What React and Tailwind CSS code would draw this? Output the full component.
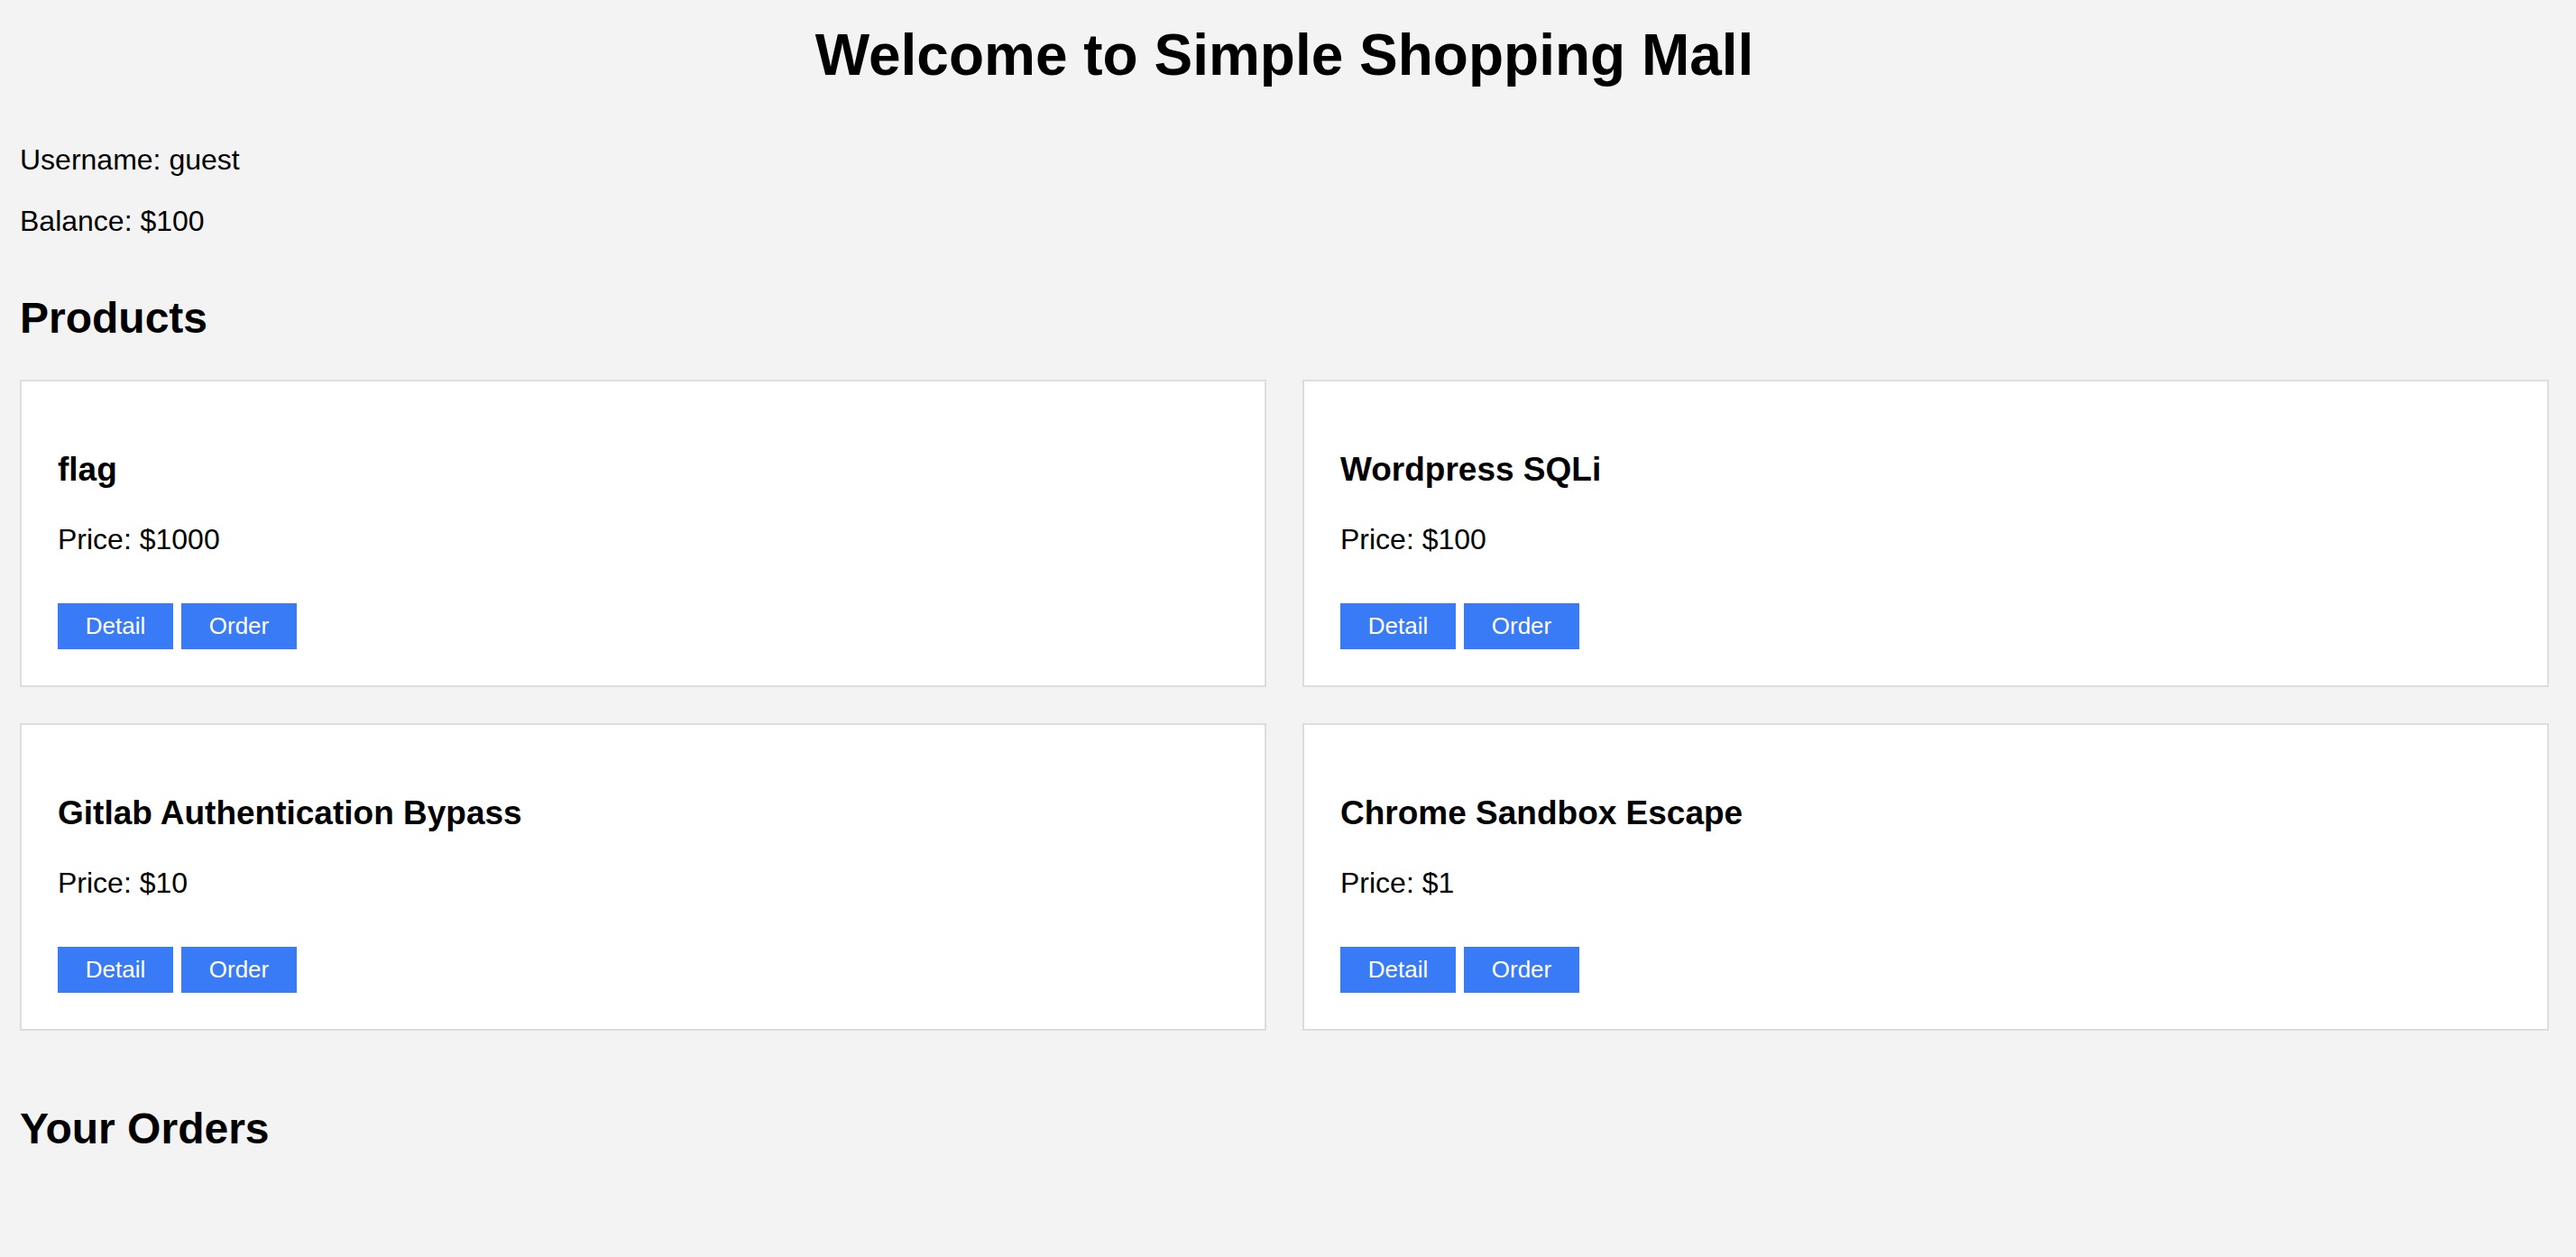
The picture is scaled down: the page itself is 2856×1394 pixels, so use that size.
const products = [
  { name: "flag", price: 1000 },
  { name: "Wordpress SQLi", price: 100 },
  { name: "Gitlab Authentication Bypass", price: 10 },
  { name: "Chrome Sandbox Escape", price: 1 },
];

function ProductCard({ product }) {
  return (
    <div className="bg-white border-2 border-[#dddddd] px-[40px] pt-[40px] pb-[40px]">
      <h3 className="mt-[39px] text-[37px] font-bold leading-none">{product.name}</h3>
      <p className="mt-[43px] text-[32px] leading-none">Price: ${product.price}</p>
      <div className="mt-[55px] flex gap-[9px]">
        <button className="w-[128px] h-[51px] bg-[#397bf6] text-white text-[26px] leading-[51px]">
          Detail
        </button>
        <button className="w-[128px] h-[51px] bg-[#397bf6] text-white text-[26px] leading-[51px]">
          Order
        </button>
      </div>
    </div>
  );
}

export default function App() {
  return (
    <div className="min-h-screen bg-[#f3f3f3] pl-[22px] pr-[30px] text-black font-['Liberation_Sans',Arial,sans-serif]">
      <h1 className="pt-[29px] text-center text-[64px] font-bold leading-none">
        Welcome to Simple Shopping Mall
      </h1>

      <p className="mt-[68px] text-[32px] leading-none">Username: guest</p>
      <p className="mt-[36px] text-[32px] leading-none">Balance: $100</p>

      <h2 className="mt-[68px] text-[48px] font-bold leading-none">Products</h2>
      <div className="mt-[44px] grid grid-cols-2 gap-[40px]">
        {products.map((p) => (
          <ProductCard key={p.name} product={p} />
        ))}
      </div>

      <h2 className="mt-[85px] text-[48px] font-bold leading-none">Your Orders</h2>
    </div>
  );
}
